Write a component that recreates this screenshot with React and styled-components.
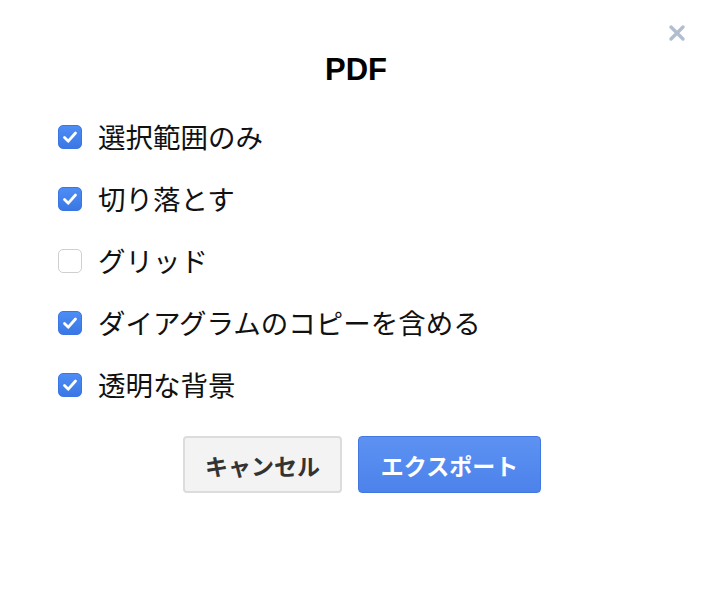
import styled, { createGlobalStyle } from "styled-components";

const GlobalStyle = createGlobalStyle`
  html, body {
    margin: 0;
    padding: 0;
    background: #ffffff;
  }
  body {
    font-family: "Liberation Sans", "Noto Sans CJK JP", sans-serif;
    color: #000000;
  }
`;

const Dialog = styled.div`
  position: relative;
  width: 712px;
  height: 594px;
  box-sizing: border-box;
  padding-top: 50px;
  background: #ffffff;
`;

const CloseButton = styled.button`
  position: absolute;
  top: 24px;
  right: 26px;
  width: 18px;
  height: 18px;
  padding: 0;
  border: none;
  background: none;
  cursor: pointer;

  svg {
    display: block;
  }
`;

const Title = styled.h2`
  margin: 0;
  font-size: 31px;
  line-height: 40px;
  font-weight: 700;
  text-align: center;
  font-family: "Liberation Sans", Arial, sans-serif;
`;

const Options = styled.div`
  margin-top: 16px;
  padding-left: 58px;
  display: flex;
  flex-direction: column;
`;

const Row = styled.label`
  display: flex;
  align-items: center;
  gap: 16px;
  height: 62px;
  font-size: 27.5px;
  font-family: "Noto Sans CJK JP", sans-serif;
  color: #111111;
  cursor: pointer;

  span.text {
    position: relative;
    top: -1px;
  }
`;

const Box = styled.span`
  width: 24px;
  height: 24px;
  box-sizing: border-box;
  border-radius: 5px;
  display: flex;
  align-items: center;
  justify-content: center;
  flex-shrink: 0;
  background: ${(p) =>
    p.checked ? "linear-gradient(#4d8df5, #3a77e4)" : "#ffffff"};
  border: 1px solid ${(p) => (p.checked ? "#3a77e4" : "#cfcfcf")};
`;

const Actions = styled.div`
  margin-top: 20px;
  display: flex;
  justify-content: center;
  gap: 16px;
  padding-left: 12px;
`;

const Button = styled.button`
  height: 57px;
  padding: 0 ${(p) => (p.primary ? "18px" : "16px")};
  min-width: ${(p) => (p.primary ? "183px" : "159px")};
  border-radius: 4px;
  font-family: "Noto Sans CJK JP", sans-serif;
  font-size: 23px;
  font-weight: 700;
  cursor: pointer;
  color: ${(p) => (p.primary ? "#ffffff" : "#333333")};
  background: ${(p) =>
    p.primary ? "linear-gradient(#5d92f3, #4c82ea)" : "#f3f3f3"};
  border: ${(p) => (p.primary ? "1px solid #4278e0" : "2px solid #dcdcdc")};
`;

const Check = () => (
  <svg width="20" height="20" viewBox="0 0 20 20">
    <path
      d="M4.5 10.5 L8.3 14.2 L15.5 6"
      fill="none"
      stroke="#ffffff"
      strokeWidth="2.8"
      strokeLinecap="round"
      strokeLinejoin="round"
    />
  </svg>
);

const options = [
  { label: "選択範囲のみ", checked: true },
  { label: "切り落とす", checked: true },
  { label: "グリッド", checked: false },
  { label: "ダイアグラムのコピーを含める", checked: true },
  { label: "透明な背景", checked: true },
];

export default function App() {
  return (
    <>
      <GlobalStyle />
      <Dialog>
        <CloseButton aria-label="close">
          <svg width="18" height="18" viewBox="0 0 18 18">
            <path
              d="M3 3 L15 15 M15 3 L3 15"
              stroke="#b3bdd0"
              strokeWidth="3.4"
              strokeLinecap="round"
            />
          </svg>
        </CloseButton>
        <Title>PDF</Title>
        <Options>
          {options.map((o) => (
            <Row key={o.label}>
              <Box checked={o.checked}>{o.checked && <Check />}</Box>
              <span className="text">{o.label}</span>
            </Row>
          ))}
        </Options>
        <Actions>
          <Button>キャンセル</Button>
          <Button primary>エクスポート</Button>
        </Actions>
      </Dialog>
    </>
  );
}
